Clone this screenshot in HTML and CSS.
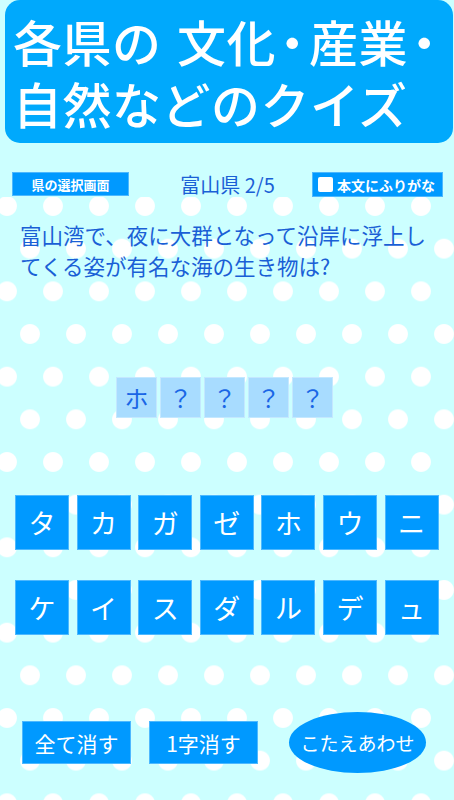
FILE: index.html
```html
<!DOCTYPE html>
<html lang="ja">
<head>
<meta charset="utf-8">
<title>各県の 文化・産業・自然などのクイズ</title>
<link rel="stylesheet" href="styles.css">
</head>
<body>
<div class="page">
  <header class="title">
    <h1>各県の <span class="gap"></span>文化<span class="dot">・</span>産業<span class="dot">・</span><br>自然などのクイズ</h1>
  </header>
  <div class="toolbar">
    <button class="tool-btn select-btn">県の選択画面</button>
    <div class="progress">富山県 2/5</div>
    <button class="tool-btn furigana-btn"><span class="check"></span>本文にふりがな</button>
  </div>
  <main class="board">
    <p class="question">富山湾で、夜に大群となって沿岸に浮上し<br>てくる姿が有名な海の生き物は?</p>
    <div class="slots">
      <div class="slot">ホ</div>
      <div class="slot">？</div>
      <div class="slot">？</div>
      <div class="slot">？</div>
      <div class="slot">？</div>
    </div>
    <div class="tiles">
      <div class="tile">タ</div>
      <div class="tile">カ</div>
      <div class="tile">ガ</div>
      <div class="tile">ゼ</div>
      <div class="tile">ホ</div>
      <div class="tile">ウ</div>
      <div class="tile">ニ</div>
      <div class="tile">ケ</div>
      <div class="tile">イ</div>
      <div class="tile">ス</div>
      <div class="tile">ダ</div>
      <div class="tile">ル</div>
      <div class="tile">デ</div>
      <div class="tile">ュ</div>
    </div>
    <div class="actions">
      <button class="act-btn clear-all">全て消す</button>
      <button class="act-btn clear-one">1字消す</button>
      <button class="answer-btn">こたえあわせ</button>
    </div>
  </main>
</div>
</body>
</html>
```
FILE: styles.css
```css
* { box-sizing: border-box; }
html, body { margin: 0; padding: 0; }
body {
  font-family: "Noto Sans CJK JP", "Noto Sans", sans-serif;
  background: #ccffff;
}
.page {
  width: 454px;
  height: 800px;
  background: #ccffff;
  display: flex;
  flex-direction: column;
  overflow: hidden;
}
.title {
  margin: 0 1px 0 5px;
  height: 143px;
  background: #00a9fc;
  border-radius: 15px;
  padding: 10px 0 0 8px;
}
.title h1 {
  margin: 0;
  color: #fff;
  font-size: 49px;
  font-weight: 500;
  line-height: 62px;
  letter-spacing: 0.5px;
  white-space: nowrap;
}
.title .gap {
  display: inline-block;
  width: 4px;
}
.title .dot {
  font-feature-settings: "palt" 1;
  padding: 0 4px;
}
.toolbar {
  margin-top: 29px;
  height: 25px;
  display: flex;
  align-items: flex-start;
  padding: 0 11px 0 12px;
}
.tool-btn {
  border: 1px solid #4db8ff;
  background: #0099ff;
  color: #fff;
  font-family: inherit;
  font-weight: 700;
  padding: 0;
  margin: 0;
  display: flex;
  align-items: center;
  justify-content: center;
}
.select-btn {
  width: 117px;
  height: 24px;
  font-size: 13px;
}
.progress {
  flex: 1;
  text-align: center;
  padding-left: 14px;
  color: #1a5fd6;
  font-size: 20px;
  line-height: 25px;
}
.furigana-btn {
  width: 131px;
  height: 25px;
  font-size: 14px;
  justify-content: flex-start;
  padding-left: 5px;
  gap: 4px;
}
.check {
  width: 15px;
  height: 15px;
  background: #fff;
  border-radius: 2px;
}
.board {
  flex: 1;
  padding: 22px 12px 0 20px;
  background-color: #ccffff;
  background-image:
    radial-gradient(circle, #fff 9.4px, rgba(255,255,255,0) 10.4px),
    radial-gradient(circle, #fff 9.4px, rgba(255,255,255,0) 10.4px);
  background-size: 46px 85.33px;
  background-position: -16px -33.67px, 7px 9px;
  display: flex;
  flex-direction: column;
}
.question {
  margin: 0;
  color: #1a5fd6;
  font-size: 21.5px;
  line-height: 31px;
  white-space: nowrap;
}
.slots {
  margin: 96px 0 0 96px;
  display: flex;
  gap: 3px;
}
.slot {
  width: 41px;
  height: 41px;
  background: #a8dcff;
  border: 1px solid #c4e8ff;
  color: #1a66e6;
  font-size: 24px;
  display: flex;
  align-items: center;
  justify-content: center;
  line-height: 1;
}
.tiles {
  margin: 77px 0 0 -5px;
  display: grid;
  grid-template-columns: repeat(7, 54px);
  column-gap: 7.6px;
  row-gap: 30px;
}
.tile {
  height: 55px;
  background: #0099ff;
  border: 1px solid #4db8ff;
  color: #fff;
  font-size: 27px;
  display: flex;
  align-items: center;
  justify-content: center;
  line-height: 1;
}
.actions {
  margin: 77px 0 0 2px;
  display: flex;
  align-items: center;
}
.act-btn {
  width: 109px;
  height: 43px;
  background: #0099ff;
  border: 1px solid #4db8ff;
  color: #fff;
  font-family: inherit;
  font-size: 21px;
  padding: 0;
  margin: 0 18px 0 0;
}
.clear-one { margin-right: 31px; }
.answer-btn {
  width: 137px;
  height: 61px;
  border-radius: 50%;
  background: #0099ff;
  border: none;
  color: #fff;
  font-family: inherit;
  font-size: 19px;
  padding: 0;
}
```
